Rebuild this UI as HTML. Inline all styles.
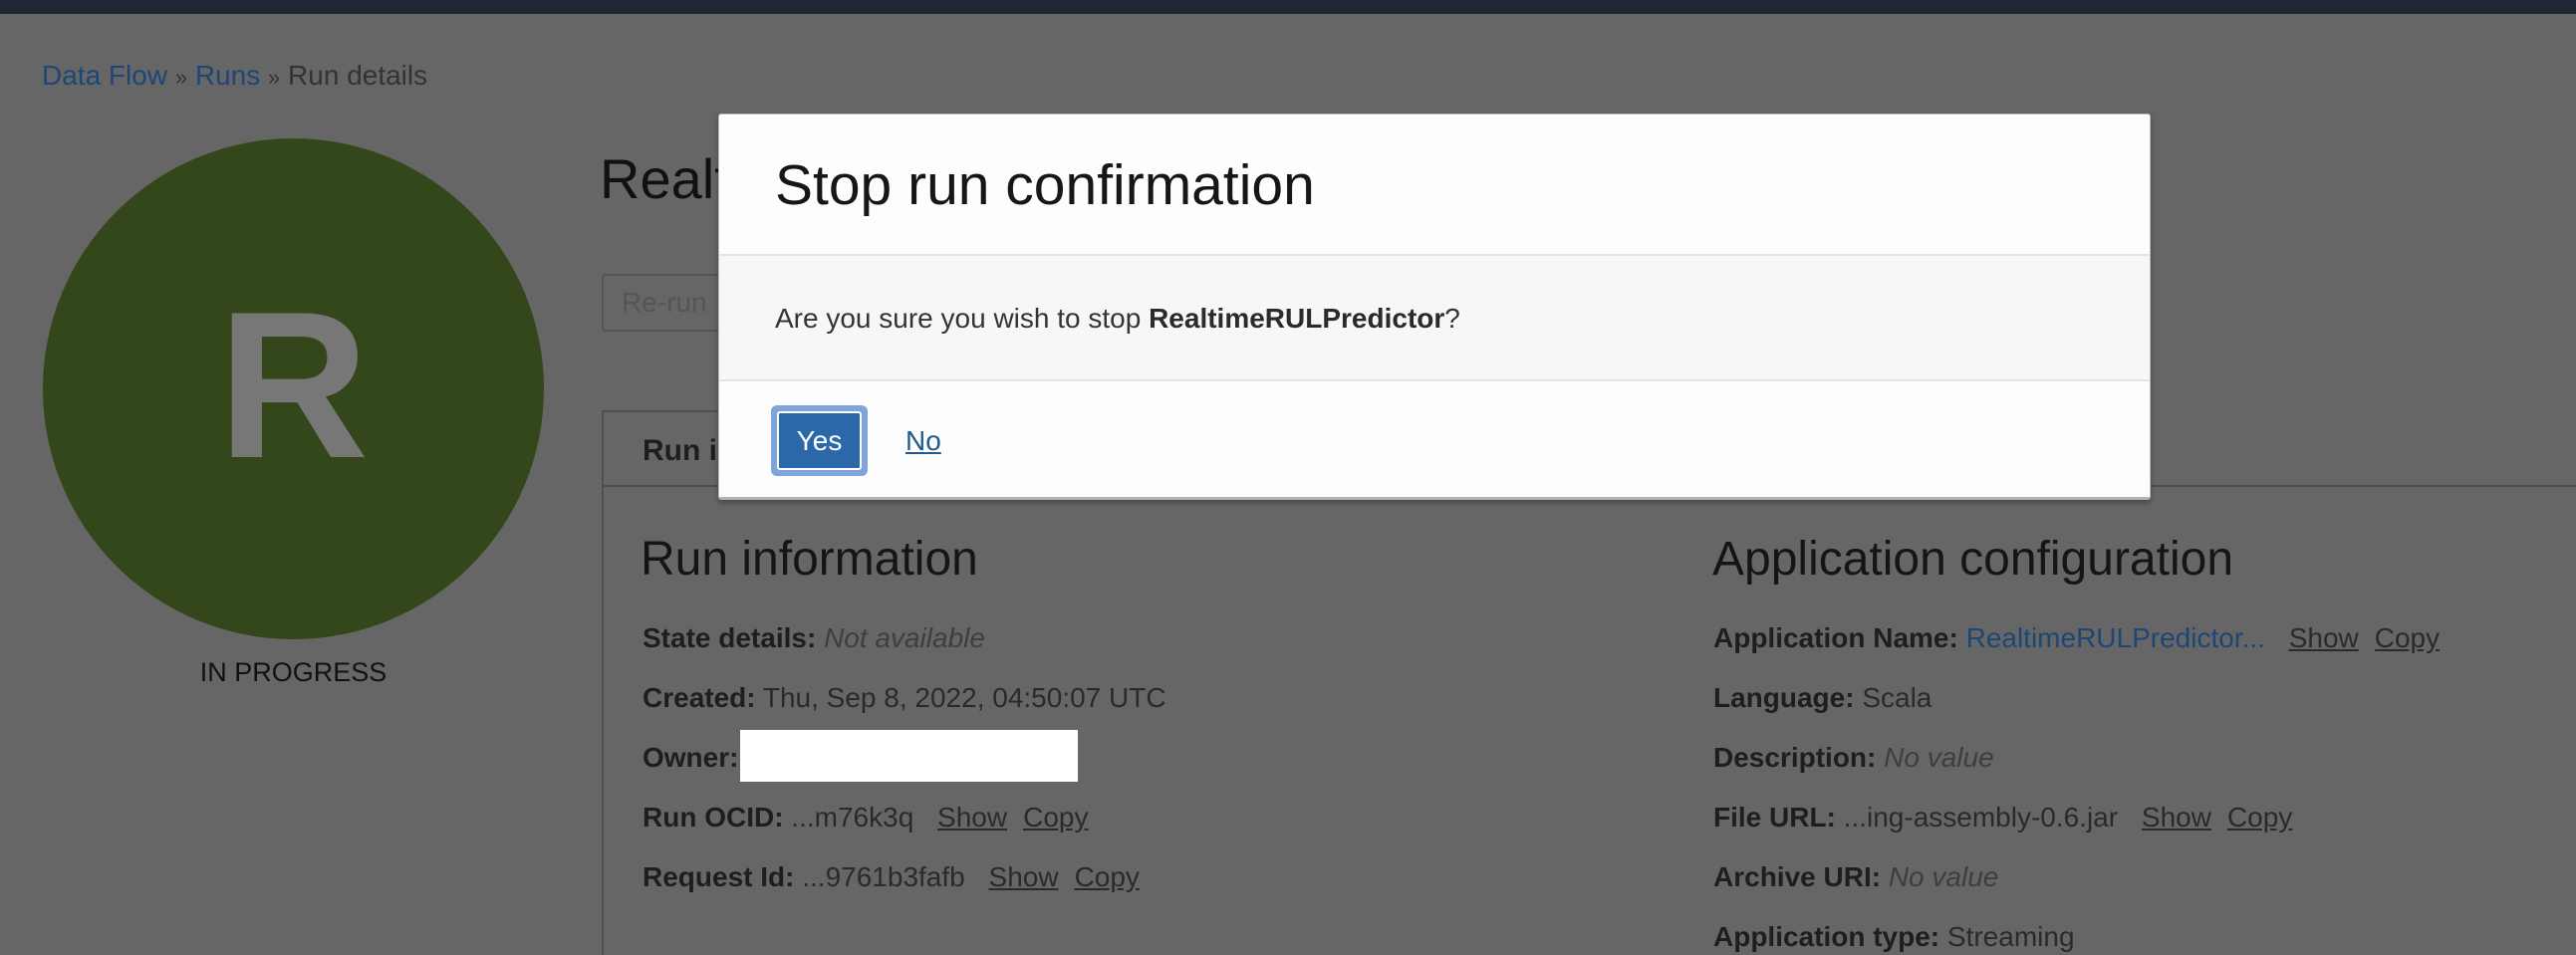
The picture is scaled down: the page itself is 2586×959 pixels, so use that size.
<!DOCTYPE html>
<html><head><meta charset="utf-8"><style>
*{margin:0;padding:0;box-sizing:border-box}
body{width:2586px;height:954px;overflow:hidden;background:#666;font-family:"Liberation Sans",Arial,sans-serif;position:relative;color:#1a1a1a}
.a{position:absolute;white-space:nowrap}
.row{font-size:28px;line-height:34px;color:#2a2a2a}
.row b{color:#1e1e1e}
.row i{color:#3e3e3e}
.u{text-decoration:underline;color:#2a2a2a;margin-left:16px}
.blue{color:#1d4676}
</style></head><body>
<div class="a" style="left:0;top:0;width:2586px;height:14px;background:#1f2735"></div>
<div class="a" style="left:42px;top:59px;font-size:28px;line-height:34px;color:#333"><span class="blue">Data Flow</span> <span style="font-size:22px">»</span> <span class="blue">Runs</span> <span style="font-size:22px">»</span> Run details</div>
<div class="a" style="left:43px;top:139px;width:503px;height:503px;border-radius:50%;background:#34471b"></div>
<div class="a" style="left:43px;top:262px;width:503px;text-align:center;font-size:210px;line-height:250px;font-weight:bold;color:#777">R</div>
<div class="a" style="left:43px;top:658px;width:503px;text-align:center;font-size:27px;line-height:34px;color:#111">IN PROGRESS</div>
<div class="a" style="left:602px;top:145px;font-size:56px;line-height:70px;color:#111">Realtime</div>
<div class="a" style="left:604px;top:275px;width:200px;height:58px;border:2px solid #555;border-radius:4px;font-size:28px;line-height:54px;padding-left:18px;color:#555">Re-run</div>
<div class="a" style="left:604px;top:412px;width:200px;height:80px;border:2px solid #4e4e4e;border-bottom:none"></div>
<div class="a" style="left:604px;top:487px;width:1982px;height:2px;background:#4e4e4e"></div>
<div class="a" style="left:604px;top:489px;width:2px;height:470px;background:#4e4e4e"></div>
<div class="a" style="left:645px;top:435px;font-size:30px;line-height:36px;font-weight:bold;color:#1e1e1e">Run information</div>
<div class="a" style="left:643px;top:532px;font-size:48px;line-height:60px;color:#151515">Run information</div>
<div class="a row" style="left:645px;top:624px"><b>State details:</b> <i>Not available</i></div>
<div class="a row" style="left:645px;top:684px"><b>Created:</b> Thu, Sep 8, 2022, 04:50:07 UTC</div>
<div class="a row" style="left:645px;top:744px"><b>Owner:</b></div>
<div class="a" style="left:743px;top:733px;width:339px;height:52px;background:#fff"></div>
<div class="a row" style="left:645px;top:804px"><b>Run OCID:</b> ...m76k3q <span class="u">Show</span><span class="u">Copy</span></div>
<div class="a row" style="left:645px;top:864px"><b>Request Id:</b> ...9761b3fafb <span class="u">Show</span><span class="u">Copy</span></div>
<div class="a" style="left:1719px;top:532px;font-size:48px;line-height:60px;color:#151515">Application configuration</div>
<div class="a row" style="left:1720px;top:624px"><b>Application Name:</b> <span class="blue">RealtimeRULPredictor...</span> <span class="u">Show</span><span class="u">Copy</span></div>
<div class="a row" style="left:1720px;top:684px"><b>Language:</b> Scala</div>
<div class="a row" style="left:1720px;top:744px"><b>Description:</b> <i>No value</i></div>
<div class="a row" style="left:1720px;top:804px"><b>File URL:</b> ...ing-assembly-0.6.jar <span class="u">Show</span><span class="u">Copy</span></div>
<div class="a row" style="left:1720px;top:864px"><b>Archive URI:</b> <i>No value</i></div>
<div class="a row" style="left:1720px;top:924px"><b>Application type:</b> Streaming</div>

<div class="a" style="left:721px;top:114px;width:1438px;height:388px;background:#fdfdfd;border:1px solid #b8bcc2;border-bottom:3px solid #b0b4ba;box-shadow:0 3px 6px rgba(0,0,0,.3);border-radius:3px">
  <div class="a" style="left:56px;top:36px;font-size:57px;line-height:70px;color:#161616">Stop run confirmation</div>
  <div class="a" style="left:0;top:140px;width:1436px;height:128px;background:#f7f7f7;border-top:2px solid #e4e4e4;border-bottom:2px solid #e4e4e4"></div>
  <div class="a" style="left:56px;top:188px;font-size:28px;line-height:34px;color:#333">Are you sure you wish to stop <b style="color:#2a2a2a">RealtimeRULPredictor</b>?</div>
  <div class="a" style="left:52px;top:292px;width:97px;height:71px;border-radius:6px;background:#7fa5da"></div>
  <div class="a" style="left:58px;top:298px;width:85px;height:59px;border-radius:3px;background:#2b68a8;border:2px solid #fff;color:#fff;font-size:28px;line-height:55px;text-align:center">Yes</div>
  <div class="a" style="left:187px;top:311px;font-size:28px;line-height:34px;color:#1f5a8a;text-decoration:underline">No</div>
</div>
</body></html>
